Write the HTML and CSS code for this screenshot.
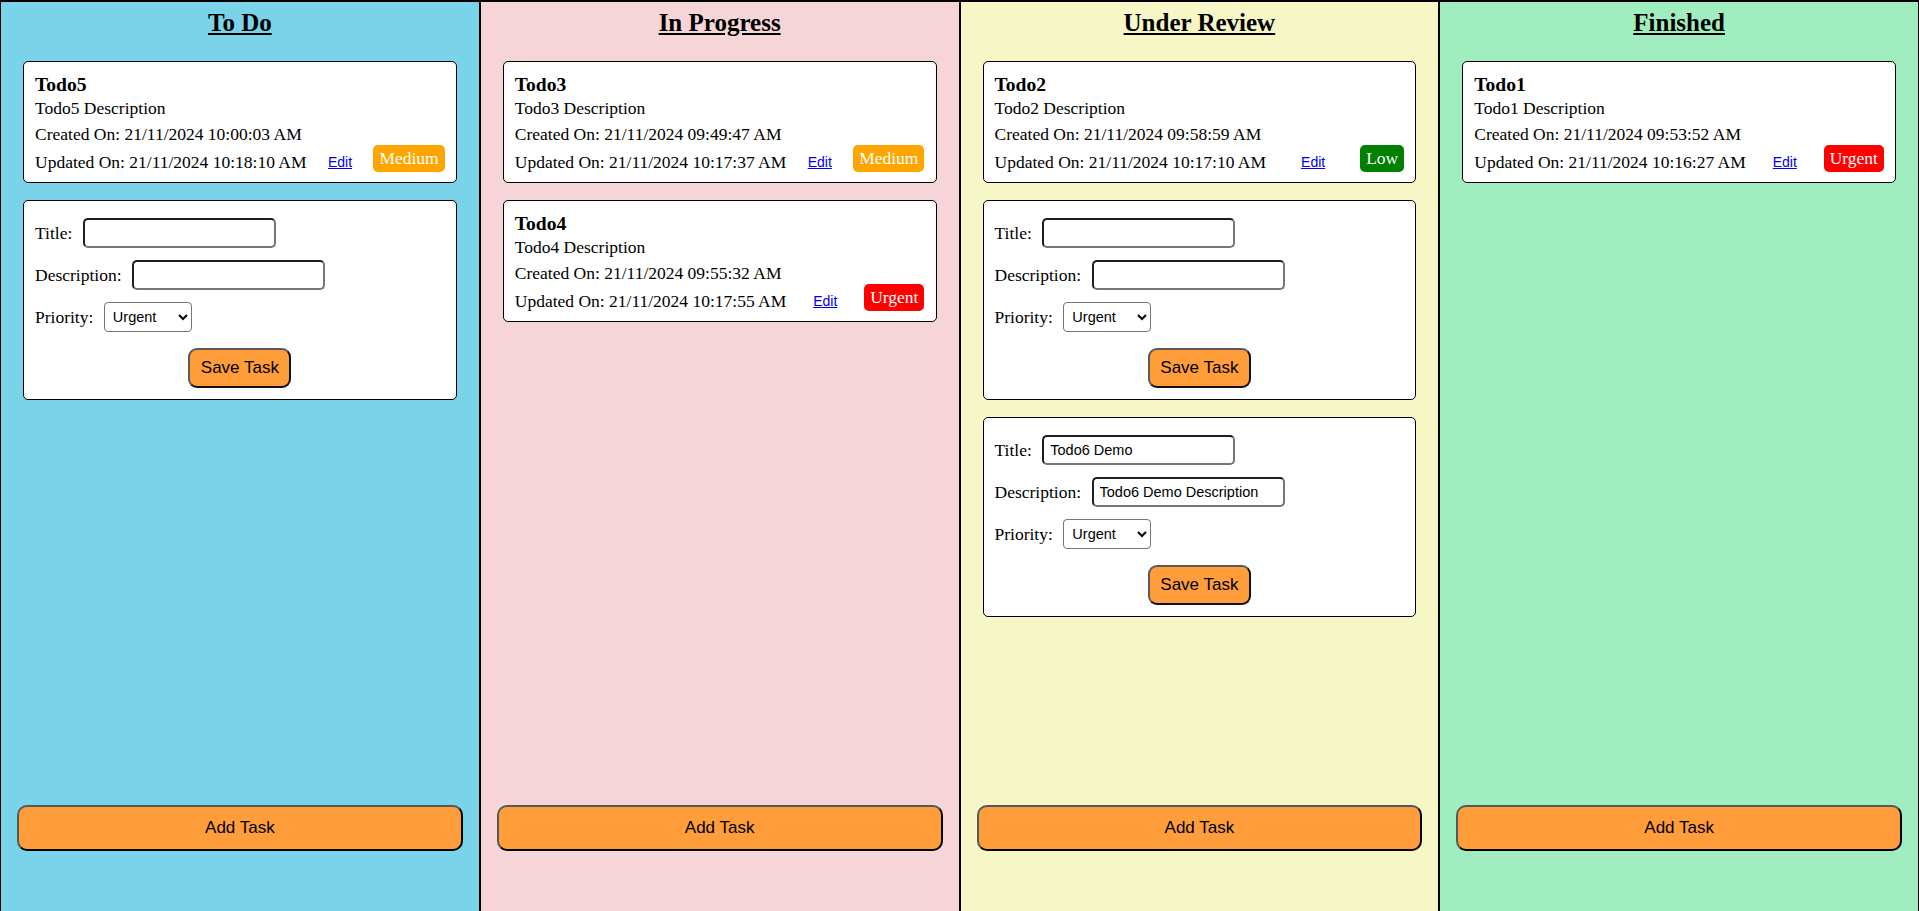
FILE: index.html
```html
<!DOCTYPE html>
<html lang="en">
<head>
<meta charset="utf-8">
<title>Task Board</title>
<link rel="stylesheet" href="styles.css">
</head>
<body>
<div class="board">
  <section class="column col-todo">
    <h2 class="col-title">To Do</h2>
    <div class="cards">
      <div class="card">
        <div class="task-title">Todo5</div>
        <div class="task-desc">Todo5 Description</div>
        <div class="task-created">Created On: 21/11/2024 10:00:03 AM</div>
        <div class="task-foot">
          <span class="task-updated">Updated On: 21/11/2024 10:18:10 AM</span>
          <a href="#" class="edit">Edit</a>
          <span class="badge medium">Medium</span>
        </div>
      </div>
      <form class="card form-card">
        <div class="row"><label>Title:</label><input type="text" class="inp"></div>
        <div class="row"><label>Description:</label><input type="text" class="inp"></div>
        <div class="row"><label>Priority:</label><select class="sel"><option>Low</option><option>Medium</option><option selected>Urgent</option></select></div>
        <div class="save-wrap"><button type="button" class="save">Save Task</button></div>
      </form>
    </div>
    <button type="button" class="add">Add Task</button>
  </section>

  <section class="column col-progress">
    <h2 class="col-title">In Progress</h2>
    <div class="cards">
      <div class="card">
        <div class="task-title">Todo3</div>
        <div class="task-desc">Todo3 Description</div>
        <div class="task-created">Created On: 21/11/2024 09:49:47 AM</div>
        <div class="task-foot">
          <span class="task-updated">Updated On: 21/11/2024 10:17:37 AM</span>
          <a href="#" class="edit">Edit</a>
          <span class="badge medium">Medium</span>
        </div>
      </div>
      <div class="card">
        <div class="task-title">Todo4</div>
        <div class="task-desc">Todo4 Description</div>
        <div class="task-created">Created On: 21/11/2024 09:55:32 AM</div>
        <div class="task-foot">
          <span class="task-updated">Updated On: 21/11/2024 10:17:55 AM</span>
          <a href="#" class="edit">Edit</a>
          <span class="badge urgent">Urgent</span>
        </div>
      </div>
    </div>
    <button type="button" class="add">Add Task</button>
  </section>

  <section class="column col-review">
    <h2 class="col-title">Under Review</h2>
    <div class="cards">
      <div class="card">
        <div class="task-title">Todo2</div>
        <div class="task-desc">Todo2 Description</div>
        <div class="task-created">Created On: 21/11/2024 09:58:59 AM</div>
        <div class="task-foot">
          <span class="task-updated">Updated On: 21/11/2024 10:17:10 AM</span>
          <a href="#" class="edit">Edit</a>
          <span class="badge low">Low</span>
        </div>
      </div>
      <form class="card form-card">
        <div class="row"><label>Title:</label><input type="text" class="inp"></div>
        <div class="row"><label>Description:</label><input type="text" class="inp"></div>
        <div class="row"><label>Priority:</label><select class="sel"><option>Low</option><option>Medium</option><option selected>Urgent</option></select></div>
        <div class="save-wrap"><button type="button" class="save">Save Task</button></div>
      </form>
      <form class="card form-card">
        <div class="row"><label>Title:</label><input type="text" class="inp" value="Todo6 Demo"></div>
        <div class="row"><label>Description:</label><input type="text" class="inp" value="Todo6 Demo Description"></div>
        <div class="row"><label>Priority:</label><select class="sel"><option>Low</option><option>Medium</option><option selected>Urgent</option></select></div>
        <div class="save-wrap"><button type="button" class="save">Save Task</button></div>
      </form>
    </div>
    <button type="button" class="add">Add Task</button>
  </section>

  <section class="column col-done">
    <h2 class="col-title">Finished</h2>
    <div class="cards">
      <div class="card">
        <div class="task-title">Todo1</div>
        <div class="task-desc">Todo1 Description</div>
        <div class="task-created">Created On: 21/11/2024 09:53:52 AM</div>
        <div class="task-foot">
          <span class="task-updated">Updated On: 21/11/2024 10:16:27 AM</span>
          <a href="#" class="edit">Edit</a>
          <span class="badge urgent">Urgent</span>
        </div>
      </div>
    </div>
    <button type="button" class="add">Add Task</button>
  </section>
</div>
</body>
</html>
```

FILE: styles.css
```css
html, body {
  margin: 0;
  padding: 0;
}

body {
  font-family: "Liberation Serif", "Times New Roman", serif;
  font-size: 17.5px;
  color: #000;
}

.board {
  display: flex;
  height: 100vh;
}

.column {
  flex: 1 1 0;
  min-width: 0;
  box-sizing: border-box;
  border: 1px solid #000;
  border-top-width: 2px;
  border-bottom-width: 0;
  display: flex;
  flex-direction: column;
}

.col-todo { background: #7ad3e8; }
.col-progress { background: #f5d5d7; }
.col-review { background: #f7f6c6; }
.col-done { background: #a0eebf; }

.col-title {
  margin: 7px 0 24px;
  font-size: 25px;
  line-height: 28px;
  font-weight: bold;
  text-align: center;
  text-decoration: underline;
}

.cards {
  flex: 1 1 auto;
  padding: 0 22px;
  display: flex;
  flex-direction: column;
  gap: 17px;
}

.card {
  background: #fff;
  border: 1px solid #000;
  border-radius: 5px;
  padding: 11px 11px 10px;
  margin: 0;
}

.task-title {
  font-size: 19.6px;
  line-height: 23px;
  font-weight: bold;
}

.task-desc {
  line-height: 22px;
  margin-top: 1px;
}

.task-created {
  line-height: 22px;
  margin-top: 4px;
}

.task-foot {
  display: flex;
  justify-content: space-between;
  align-items: flex-end;
}

.task-updated {
  line-height: 20px;
}

.edit {
  font-family: "Liberation Sans", Arial, sans-serif;
  font-size: 14px;
  line-height: 20px;
  color: #0000ee;
  text-decoration: underline;
}

.badge {
  color: #fff;
  line-height: 21px;
  padding: 3px 6px;
  border-radius: 5px;
}

.badge.medium { background: #ffa500; }
.badge.urgent { background: #ff0000; }
.badge.low { background: #008000; }

.form-card {
  padding: 17px 11px 11px;
}

.row {
  display: flex;
  align-items: center;
  gap: 10.5px;
  margin-bottom: 12px;
}

.row label {
  line-height: 22px;
}

.inp {
  box-sizing: border-box;
  width: 193px;
  height: 30px;
  margin: 0;
  padding: 0 6px;
  font-family: "Liberation Sans", Arial, sans-serif;
  font-size: 14.5px;
  color: #000;
  background: #fff;
  border: 2px solid;
  border-color: #1e1e1e #767676 #767676 #1e1e1e;
  border-radius: 5px;
  outline: none;
}

.sel {
  box-sizing: border-box;
  width: 88px;
  height: 30px;
  margin: 0;
  padding: 0 4px;
  font-family: "Liberation Sans", Arial, sans-serif;
  font-size: 14.5px;
  color: #000;
  background-color: #fff;
  border: 1px solid #767676;
  border-radius: 4px;
}

.save-wrap {
  text-align: center;
  margin-top: 16px;
}

.save {
  box-sizing: border-box;
  height: 40px;
  padding: 0 10.5px;
  font-family: "Liberation Sans", Arial, sans-serif;
  font-size: 17px;
  color: #000;
  background: #ff9d3a;
  border: 2px solid;
  border-color: #5a5a5a #111 #111 #5a5a5a;
  border-radius: 9px;
  cursor: pointer;
}

.add {
  box-sizing: border-box;
  height: 46px;
  margin: 0 16px 60px;
  padding: 0;
  font-family: "Liberation Sans", Arial, sans-serif;
  font-size: 17px;
  color: #000;
  background: #ff9d3a;
  border: 2px solid;
  border-color: #4f5a5e #000 #000 #4f5a5e;
  border-radius: 10px;
  cursor: pointer;
}
```
